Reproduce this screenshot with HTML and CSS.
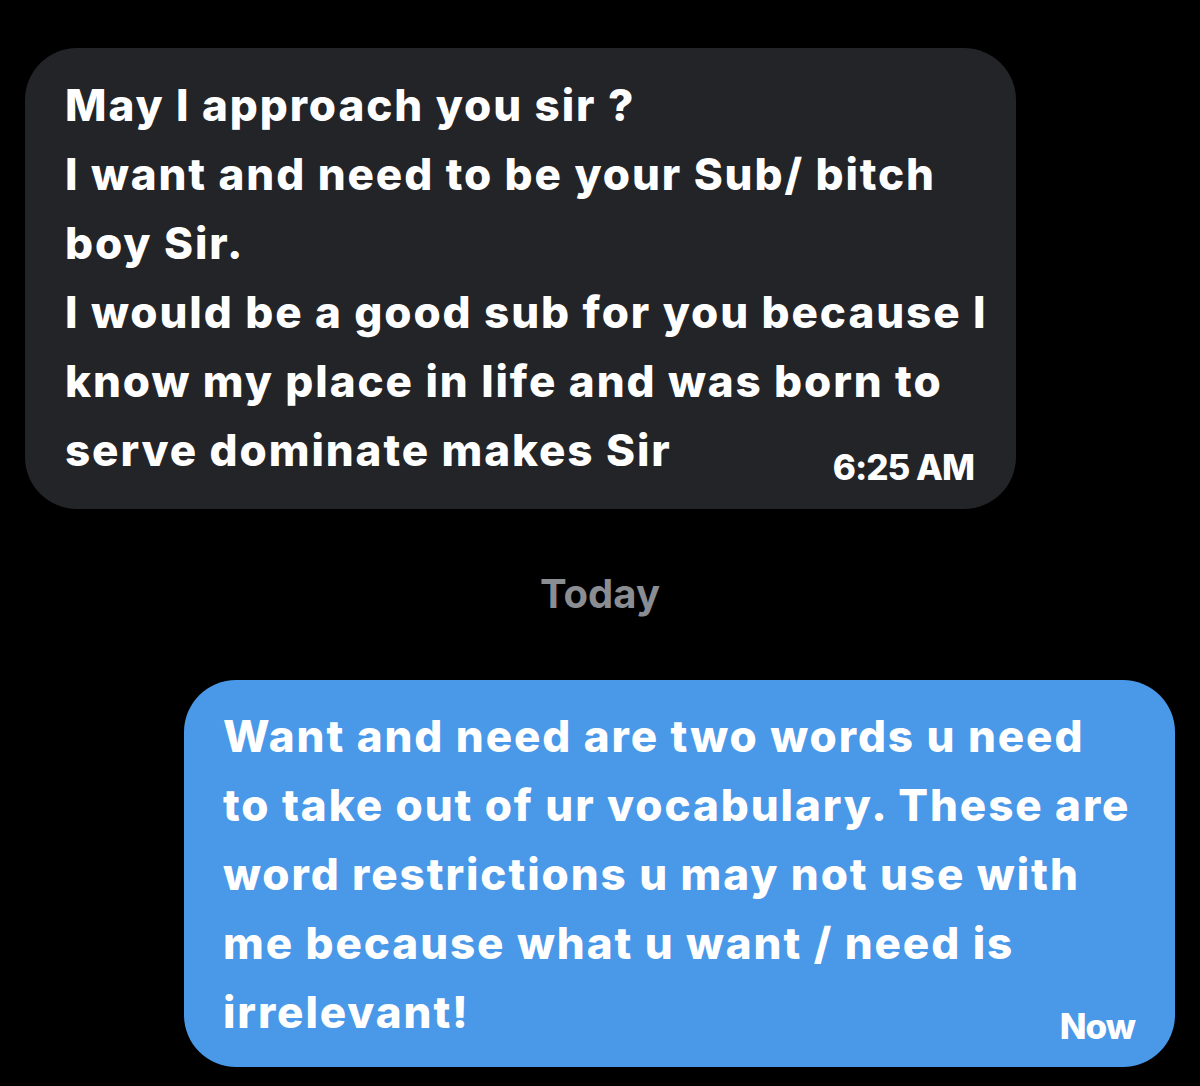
FILE: index.html
```html
<!DOCTYPE html>
<html lang="en">
<head>
    <meta charset="UTF-8">
    <meta name="viewport" content="width=device-width, initial-scale=1.0">
    <title>Messages</title>
    <link rel="stylesheet" href="styles.css">
</head>
<body>
    <div class="thread">
        <div class="bubble incoming">
            <div class="text">May I approach you sir ?<br>I want and need to be your Sub/ bitch<br>boy Sir.<br>I would be a good sub for you because I<br>know my place in life and was born to</div>
            <div class="last">
                <span>serve dominate makes Sir</span>
                <span class="time">6:25 AM</span>
            </div>
        </div>

        <div class="day">Today</div>

        <div class="bubble outgoing">
            <div class="text">Want and need are two words u need<br>to take out of ur vocabulary. These are<br>word restrictions u may not use with<br>me because what u want / need is</div>
            <div class="last">
                <span>irrelevant!</span>
                <span class="time">Now</span>
            </div>
        </div>
    </div>
</body>
</html>
```

FILE: styles.css
```css
/* Page */
body {
    margin: 0;
    background: #000;
    font-family: 'Inter', 'Noto Sans', sans-serif;
    font-weight: 800;
    color: #fff;
}

.thread {
    display: flex;
    flex-direction: column;
    padding-top: 48px;
}

/* Message bubbles */
.bubble {
    width: 991px;
    box-sizing: border-box;
    border-radius: 52px;
    font-size: 44px;
    line-height: 69px;
    letter-spacing: 1.9px;
    white-space: nowrap;
}

.incoming {
    margin-left: 25px;
    background: #232427;
    padding: 23px 40px 24px 40px;
}

.outgoing {
    margin-left: 184px;
    background: #4a98e8;
    padding: 22px 40px 20px 39px;
}

.last {
    display: flex;
    justify-content: space-between;
    align-items: flex-end;
}

/* Timestamp */
.time {
    font-size: 35px;
    line-height: 1;
    letter-spacing: -1px;
}

.incoming .time {
    margin-right: 2px;
}

.outgoing .time {
    margin-bottom: 3px;
}

/* Day separator */
.day {
    margin: 61px 0 62px;
    text-align: center;
    font-size: 40px;
    font-weight: 700;
    line-height: 48px;
    color: #8a8d91;
}
```
